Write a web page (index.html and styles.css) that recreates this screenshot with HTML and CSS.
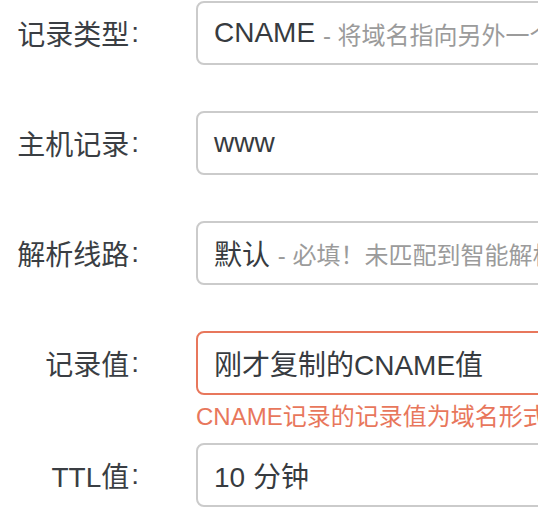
FILE: index.html
```html
<!DOCTYPE html>
<html lang="zh-CN">
<head>
<meta charset="utf-8">
<title>添加记录</title>
<link rel="stylesheet" href="styles.css">
</head>
<body>
<form class="form">
  <div class="group">
    <div class="label">记录类型<span class="colon">:</span></div>
    <div class="control">
      <div class="field">CNAME <span class="hint">- 将域名指向另外一个域名</span></div>
    </div>
  </div>
  <div class="group">
    <div class="label">主机记录<span class="colon">:</span></div>
    <div class="control">
      <div class="field">www</div>
    </div>
  </div>
  <div class="group">
    <div class="label">解析线路<span class="colon">:</span></div>
    <div class="control">
      <div class="field">默认 <span class="hint">- 必填！未匹配到智能解析线路时，返回【默认】线路设置结果</span></div>
    </div>
  </div>
  <div class="group has-error">
    <div class="label">记录值<span class="colon">:</span></div>
    <div class="control">
      <div class="field field-error">刚才复制的CNAME值</div>
      <div class="help">CNAME记录的记录值为域名形式（以.结尾）</div>
    </div>
  </div>
  <div class="group">
    <div class="label">TTL值<span class="colon">:</span></div>
    <div class="control">
      <div class="field">10 分钟</div>
    </div>
  </div>
</form>
</body>
</html>
```
FILE: styles.css
```css
html, body {
  margin: 0;
  padding: 0;
  overflow: hidden;
  background: #ffffff;
}

body {
  font-family: "Liberation Sans", "Noto Sans CJK SC", sans-serif;
  color: #3a3e43;
}

.form {
  padding-top: 1px;
  width: 700px;
}

.group {
  display: flex;
  align-items: flex-start;
  margin-bottom: 46px;
}

.group.has-error {
  margin-bottom: 11px;
}

.label {
  flex: 0 0 139px;
  height: 64px;
  display: flex;
  align-items: center;
  justify-content: flex-end;
  font-size: 28px;
  color: #3a3e43;
  white-space: nowrap;
}

.colon {
  margin-left: 2px;
}

.control {
  margin-left: 57px;
}

.field {
  box-sizing: border-box;
  width: 440px;
  height: 64px;
  border: 2px solid #cbcbcb;
  border-radius: 8px;
  padding: 0 16px;
  display: flex;
  align-items: center;
  font-size: 28px;
  color: #373b40;
  white-space: pre;
  overflow: hidden;
}

.hint {
  font-size: 24px;
  color: #9b9b9b;
}

.field-error {
  border-color: #e8775c;
}

.help {
  margin-top: 7px;
  font-size: 24px;
  line-height: 30px;
  color: #e8775c;
  white-space: nowrap;
}
```
